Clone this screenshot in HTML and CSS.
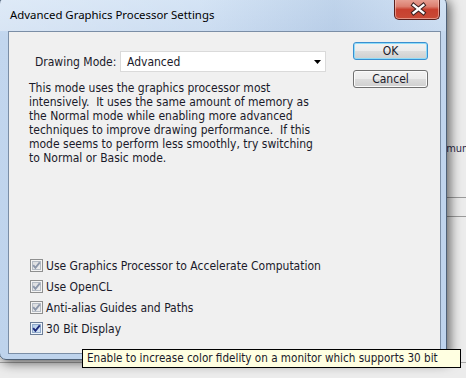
FILE: index.html
```html
<!DOCTYPE html>
<html lang="en">

<head>
    <meta charset="UTF-8">
    <title>Advanced Graphics Processor Settings</title>
    <link rel="stylesheet" href="styles.css">
</head>

<body>
    <div class="screen">

        <!-- Panel behind the dialog -->
        <div class="panel">
            <div class="panel-row">Maximum</div>
            <div class="panel-rule first"></div>
            <div class="panel-rule"></div>
        </div>
        <div class="base-rule"></div>

        <!-- Dialog window -->
        <div class="window">
            <div class="titlebar">
                <span class="title">Advanced Graphics Processor Settings</span>
                <div class="close">
                    <svg width="46" height="22" viewBox="0 0 46 22">
                        <path d="M20 8 L30 16 M30 8 L20 16" stroke="#3b2020" stroke-width="4.4" stroke-linecap="square" fill="none"/>
                        <path d="M20 8 L30 16 M30 8 L20 16" stroke="#ffffff" stroke-width="2.4" stroke-linecap="square" fill="none"/>
                    </svg>
                </div>
            </div>

            <div class="client">
                <div class="main">
                    <div class="mode-row">
                        <span class="mode-label">Drawing Mode:</span>
                        <div class="select">
                            <span>Advanced</span>
                            <svg width="7" height="4" viewBox="0 0 7 4"><path d="M0 0 H7 L3.5 4 Z" fill="#000"/></svg>
                        </div>
                    </div>

                    <p class="desc">This mode uses the graphics processor most<br>intensively.&nbsp; It uses the same amount of memory as<br>the Normal mode while enabling more advanced<br>techniques to improve drawing performance.&nbsp; If this<br>mode seems to perform less smoothly, try switching<br>to Normal or Basic mode.</p>

                    <div class="options">
                        <div class="check muted">
                            <span class="box"><svg width="11" height="11" viewBox="0 0 11 11"><path d="M2.2 5.2 L4.4 7.8 L8.8 2.4" stroke-width="1.9" fill="none"/></svg></span>
                            <span>Use Graphics Processor to Accelerate Computation</span>
                        </div>
                        <div class="check muted">
                            <span class="box"><svg width="11" height="11" viewBox="0 0 11 11"><path d="M2.2 5.2 L4.4 7.8 L8.8 2.4" stroke-width="1.9" fill="none"/></svg></span>
                            <span>Use OpenCL</span>
                        </div>
                        <div class="check muted">
                            <span class="box"><svg width="11" height="11" viewBox="0 0 11 11"><path d="M2.2 5.2 L4.4 7.8 L8.8 2.4" stroke-width="1.9" fill="none"/></svg></span>
                            <span>Anti-alias Guides and Paths</span>
                        </div>
                        <div class="check">
                            <span class="box"><svg width="11" height="11" viewBox="0 0 11 11"><path d="M2.2 5.2 L4.4 7.8 L8.8 2.4" stroke-width="1.9" fill="none"/></svg></span>
                            <span>30 Bit Display</span>
                        </div>
                    </div>
                </div>

                <div class="actions">
                    <button class="btn default">OK</button>
                    <button class="btn">Cancel</button>
                </div>
            </div>
        </div>

        <!-- Tooltip for 30 Bit Display -->
        <div class="tooltip">Enable to increase color fidelity on a monitor which supports 30 bit</div>
    </div>
</body>

</html>
```

FILE: styles.css
```css
* {
    margin: 0;
    padding: 0;
    box-sizing: border-box;
}

body {
    width: 466px;
    height: 378px;
    overflow: hidden;
    font-family: "DejaVu Sans Condensed", "DejaVu Sans", sans-serif;
    font-size: 12px;
    color: #1a1a2a;
}

.screen {
    position: relative;
    width: 466px;
    height: 378px;
    overflow: hidden;
    background-color: #ececec;
}

/* Background panel */
.panel {
    padding: 141px 0 0 423px;
}

.panel-row {
    height: 16px;
    line-height: 16px;
    font-size: 11px;
    color: #2a2a4a;
}

.panel-rule {
    border-top: 1px solid #9a9a9a;
    margin-top: 18px;
}

.panel-rule.first {
    margin-top: 40px;
}

.base-rule {
    margin-top: 145px;
    border-top: 1px solid #a8a8a8;
}

/* Window frame */
.window {
    position: absolute;
    left: -1px;
    top: -3px;
    width: 448px;
    height: 363px;
    border: 1px solid #4f6177;
    border-radius: 7px;
    background: linear-gradient(180deg, #cddff3 0%, #c2d6ee 40px, #bed3ec 100%);
    box-shadow: 3px 3px 12px rgba(0, 0, 0, 0.6);
    display: flex;
    flex-direction: column;
}

.titlebar {
    height: 33px;
    display: flex;
    align-items: flex-start;
    padding-left: 10px;
    border-radius: 6px 6px 0 0;
    background: linear-gradient(90deg, rgba(255, 255, 255, 0.35) 0%, rgba(255, 255, 255, 0.15) 45%, rgba(120, 150, 190, 0.15) 75%, rgba(255, 255, 255, 0.1) 100%);
}

.title {
    margin-top: 9px;
    font-family: "Noto Sans", sans-serif;
    font-size: 11.4px;
    line-height: 16px;
    color: #000;
}

.close {
    margin-left: auto;
    margin-right: 6px;
    width: 46px;
    height: 22px;
    border: 1px solid #5a1f1c;
    border-top: none;
    border-radius: 0 0 5px 5px;
    background: linear-gradient(180deg, #e9a89c 0%, #dc7f70 40%, #c8402f 55%, #c94a36 100%);
    box-shadow: inset 0 0 0 1px rgba(255, 220, 210, 0.5);
    display: flex;
}

.close svg {
    margin: -1px 0 0 -1px;
}

/* Client area */
.client {
    flex: 1;
    margin: 0 5px 5px 8px;
    border: 1px solid #7b8ea6;
    background-color: #f0f0f0;
    display: flex;
}

.main {
    flex: 1;
    display: flex;
    flex-direction: column;
}

.mode-row {
    margin-top: 19px;
    padding-left: 26px;
    height: 21px;
    display: flex;
    align-items: center;
}

.mode-label {
    width: 85px;
}

.select {
    width: 206px;
    height: 21px;
    border: 1px solid #dadada;
    background-color: #fff;
    display: flex;
    align-items: center;
    justify-content: space-between;
    padding: 0 4px 0 6px;
}

.desc {
    margin: 9px 0 0 20px;
    line-height: 14px;
    white-space: nowrap;
}

/* Checkboxes */
.options {
    margin-top: auto;
    padding: 0 0 14px 21px;
}

.check {
    height: 21px;
    display: flex;
    align-items: center;
    gap: 3px;
}

.box {
    width: 13px;
    height: 13px;
    border: 1px solid #8e8f8f;
    background: linear-gradient(135deg, #c7ccd2 0%, #eef0f2 100%);
    box-shadow: inset 0 0 0 1px #f4f4f4, inset 0 0 0 2px #b4bbc4;
    display: flex;
}

.box path {
    stroke: #1d2b7c;
}

.check.muted .box {
    background: linear-gradient(135deg, #d6d8db 0%, #f2f2f2 100%);
}

.check.muted .box path {
    stroke: #8c97aa;
}

.check:not(.muted) .box {
    border-color: #6c7e98;
    background: linear-gradient(135deg, #a9c6e6 0%, #e4eefa 100%);
    box-shadow: inset 0 0 0 1px #eef4fb, inset 0 0 0 2px #90aacb;
}

/* Buttons */
.actions {
    width: 75px;
    margin-right: 12px;
    padding-top: 10px;
    display: flex;
    flex-direction: column;
    gap: 10px;
}

.btn {
    height: 18px;
    border: 1px solid #707070;
    border-radius: 3px;
    background: linear-gradient(180deg, #f2f2f2 0%, #ebebeb 50%, #dddddd 50%, #cfcfcf 100%);
    box-shadow: inset 0 0 0 1px #fbfbfb;
    font-family: inherit;
    font-size: 12px;
    color: #1a1a2a;
}

.btn.default {
    border-color: #3a8fd0;
    box-shadow: inset 0 0 0 1px #8fdcf8;
}

/* Tooltip */
.tooltip {
    position: absolute;
    left: 82px;
    top: 349px;
    width: 379px;
    height: 19px;
    border: 1px solid #000;
    background-color: #ffffe1;
    padding-left: 4px;
    line-height: 17px;
    font-size: 11.6px;
    white-space: nowrap;
}
```
